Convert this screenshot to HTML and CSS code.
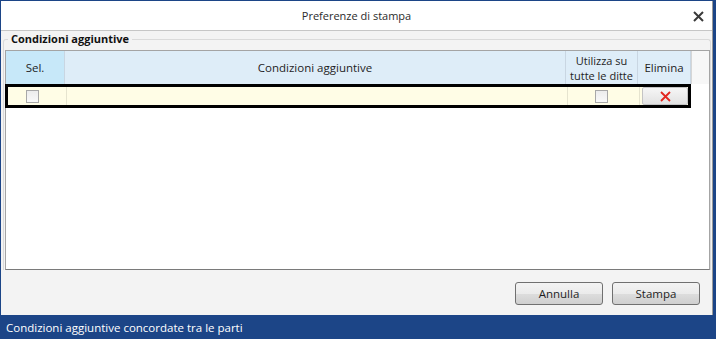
FILE: index.html
```html
<!DOCTYPE html>
<html lang="it">
<head>
    <meta charset="UTF-8">
    <title>Preferenze di stampa</title>
    <link rel="stylesheet" href="styles.css">
</head>
<body>
    <div class="dialog">
        <div class="titlebar">
            <span class="title">Preferenze di stampa</span>
            <span class="close">
                <svg width="11" height="11" viewBox="0 0 11 11"><path d="M1 1 L10 10 M10 1 L1 10" stroke="#3a3a3a" stroke-width="2"/></svg>
            </span>
        </div>
        <div class="content">
            <fieldset class="group">
                <legend>Condizioni aggiuntive</legend>
                <div class="grid">
                    <div class="row head">
                        <div class="cell sel">Sel.</div>
                        <div class="cell">Condizioni aggiuntive</div>
                        <div class="cell two">Utilizza su<br>tutte le ditte</div>
                        <div class="cell">Elimina</div>
                        <div class="cell filler"></div>
                    </div>
                    <div class="row data">
                        <div class="cell"><span class="check first"></span></div>
                        <div class="cell"></div>
                        <div class="cell"><span class="check"></span></div>
                        <div class="cell del">
                            <button class="delete">
                                <svg width="11" height="11" viewBox="0 0 11 11"><path d="M1 1 L10 10 M10 1 L1 10" stroke="#e3261f" stroke-width="1.8"/></svg>
                            </button>
                        </div>
                    </div>
                </div>
            </fieldset>
            <div class="actions">
                <button class="btn">Annulla</button>
                <button class="btn">Stampa</button>
            </div>
        </div>
    </div>
    <div class="status">Condizioni aggiuntive concordate tra le parti</div>
</body>
</html>
```

FILE: styles.css
```css
html, body {
    margin: 0;
    padding: 0;
    width: 716px;
    height: 339px;
    overflow: hidden;
    background-color: #1c4587;
    font-family: "Open Sans", "Noto Sans", sans-serif;
    font-size: 11px;
    color: #1e1e1e;
}

.dialog {
    margin: 1px 3px 0 1px;
    height: 314px;
    background-color: #f3f3f3;
    border-right: 1px solid #9a9a9a;
    display: flex;
    flex-direction: column;
}

.titlebar {
    height: 29px;
    background: white;
    border-bottom: 1px solid #c6c6c6;
    display: flex;
    align-items: center;
    justify-content: center;
    position: relative;
}

.title {
    color: #2b2b2b;
}

.close {
    position: absolute;
    right: 8px;
    top: 10px;
    line-height: 0;
}

.content {
    flex: 1;
    display: flex;
    flex-direction: column;
}

.group {
    margin: 1px 1px 0 2px;
    padding: 4px 0 0 1px;
    border: 1px solid #dadada;
    border-bottom: none;
    border-radius: 3px 3px 0 0;
}

.group legend {
    font-weight: bold;
    padding: 0 3px;
    margin-left: 3px;
    color: #111;
    line-height: 14px;
}

.grid {
    height: 218px;
    background: white;
    border: 1px solid #a4a4a4;
    border-bottom-color: #7a7a7a;
}

.row {
    display: grid;
    grid-template-columns: 59px 501px 72px 53px 1fr;
}

.head {
    height: 33px;
}

.head .cell {
    background: #deedf8;
    border-right: 1px solid #c9d6e2;
    display: flex;
    align-items: center;
    justify-content: center;
    text-align: center;
    line-height: 14px;
    font-size: 11.5px;
}

.head .cell.two {
    font-size: 11px;
    line-height: 15px;
}

.head .cell.sel {
    background: #c7e8f9;
}

.head .cell.filler {
    background: #f7f7f7;
    border-right: none;
    border-left: 1px solid #d6d6d6;
}

.data {
    width: 680px;
    height: 18px;
    margin-left: -1px;
    border: 3px solid #000;
    background: #fffde6;
    grid-template-columns: 59px 501px 72px 48px;
}

.data .cell {
    border-right: 1px solid #e6e4cf;
    display: flex;
    align-items: center;
    justify-content: center;
}

.data .cell.del {
    border-right: none;
    align-items: stretch;
}

.check {
    width: 11px;
    height: 11px;
    margin-right: 5px;
    border: 1px solid #a8a8a8;
    background: linear-gradient(#ececec, #f9f9f9);
}

.check.first {
    margin-right: 10px;
}

.delete {
    width: 100%;
    margin: 0 0 0 2px;
    padding: 0;
    border: 1px solid #c4c4c4;
    border-radius: 2px;
    background: linear-gradient(#f6f6f6, #e2e2e2);
    display: flex;
    align-items: center;
    justify-content: center;
}

.actions {
    flex: 1;
    display: flex;
    justify-content: flex-end;
    align-items: flex-start;
    gap: 9px;
    padding: 12px 12px 0 0;
}

.btn {
    width: 88px;
    height: 23px;
    font-family: "Open Sans", "Noto Sans", sans-serif;
    font-size: 11.5px;
    color: #1e1e1e;
    border: 1px solid #707070;
    border-radius: 3px;
    background: linear-gradient(#f3f3f3 0%, #ebebeb 50%, #dddddd 51%, #cfcfcf 100%);
}

.status {
    height: 24px;
    display: flex;
    align-items: center;
    padding-left: 6px;
    color: white;
    font-size: 11.5px;
}
```
